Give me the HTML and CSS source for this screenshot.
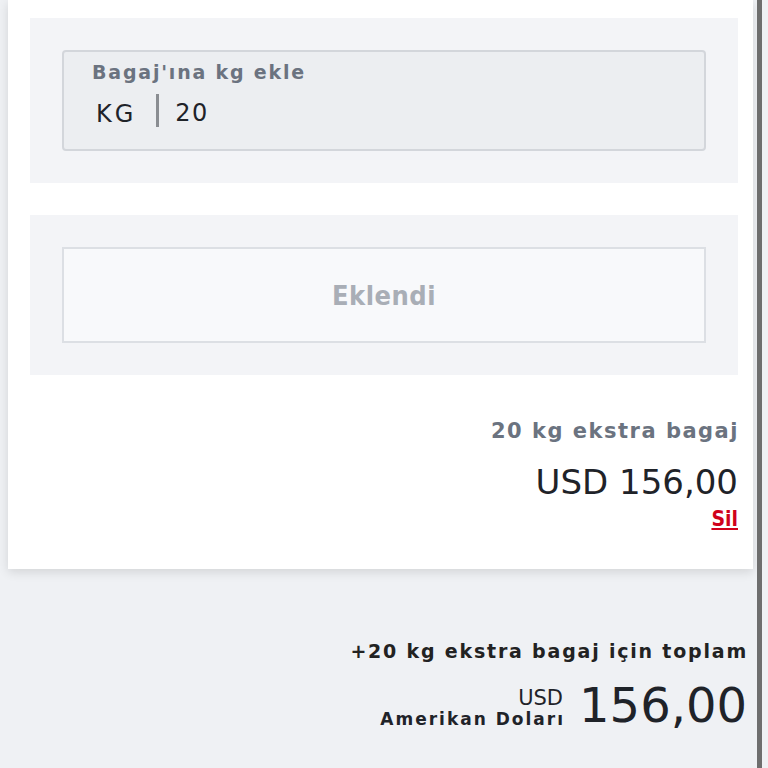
FILE: index.html
```html
<!DOCTYPE html>
<html lang="tr">
<head>
    <meta charset="UTF-8">
    <meta name="viewport" content="width=device-width, initial-scale=1.0">
    <title>Ekstra bagaj</title>
    <link rel="stylesheet" href="styles.css">
</head>
<body>
    <div class="page">
        <div class="main">
            <div class="card">
                <div class="section">
                    <div class="field">
                        <label class="field-label" for="kg">Bagaj'ına kg ekle</label>
                        <div class="field-row">
                            <span class="unit">KG</span>
                            <span class="divider"></span>
                            <input class="field-input" id="kg" type="text" value="20">
                        </div>
                    </div>
                </div>

                <div class="section">
                    <button class="added-btn" disabled>Eklendi</button>
                </div>

                <div class="summary">
                    <div class="summary-title">20 kg ekstra bagaj</div>
                    <div class="summary-price">USD 156,00</div>
                    <a class="remove-link" href="#">Sil</a>
                </div>
            </div>

            <div class="total">
                <div class="total-title">+20 kg ekstra bagaj için toplam</div>
                <div class="total-row">
                    <div class="currency">
                        <span class="currency-code">USD</span>
                        <span class="currency-name">Amerikan Doları</span>
                    </div>
                    <div class="total-amount">156,00</div>
                </div>
            </div>
        </div>
        <div class="scroll-edge"></div>
    </div>
</body>
</html>
```

FILE: styles.css
```css
html, body { margin: 0; padding: 0; height: 100%; }
body { font-family: "DejaVu Sans", Verdana, sans-serif; background: #eff1f4; color: #1f2329; overflow: hidden; }
.page { display: flex; height: 768px; }
.main { flex: 1; padding-left: 8px; padding-right: 4px; }
.scroll-edge { width: 5px; background: #6e6e6e; margin-right: 6px; }

.card { background: white; padding: 18px 15px 38px 22px; box-shadow: 0 3px 10px rgba(0, 0, 0, 0.12); }
.section { background: #f3f4f7; padding: 32px; }
.section + .section { margin-top: 32px; }

.field { background: #eceef1; border: 2px solid #d3d6db; border-radius: 4px; box-sizing: border-box; padding: 8px 28px 0 28px; height: 101px; }
.field-label { display: block; font-weight: bold; font-size: 19px; letter-spacing: 1.8px; color: #6b7380; line-height: 24px; }
.field-row { display: flex; align-items: center; margin-top: 10px; padding-left: 4px; }
.unit { font-size: 24px; letter-spacing: 3px; color: #1f2329; position: relative; top: 3px; }
.divider { width: 3px; height: 33px; background: #8a8d92; margin: 0 16px 0 20px; }
.field-input { font-family: "DejaVu Sans", sans-serif; font-size: 24px; letter-spacing: 1.5px; color: #1f2329; border: none; background: transparent; padding: 0; outline: none; width: 200px; margin-top: 4px; }

.added-btn { display: block; width: 100%; height: 96px; background: #f8f9fb; border: 2px solid #dcdfe4; font-family: "DejaVu Sans Condensed", "DejaVu Sans", sans-serif; font-weight: bold; font-size: 27px; letter-spacing: 0.5px; color: #a9aeb6; cursor: default; }

.summary { text-align: right; padding-top: 44px; }
.summary-title { font-weight: bold; font-size: 21px; color: #6b7380; letter-spacing: 1.5px; line-height: 24px; margin-right: -1px; }
.summary-price { font-size: 34px; line-height: 40px; margin-top: 19px; }
.remove-link { display: inline-block; margin-top: 5px; font-family: "DejaVu Sans Condensed", "DejaVu Sans", sans-serif; font-weight: bold; font-size: 21px; color: #d0021b; text-decoration: underline; line-height: 24px; }

.total { text-align: right; padding: 70px 6px 0 0; }
.total-title { font-weight: bold; font-size: 19px; letter-spacing: 1.8px; color: #222; line-height: 24px; margin-right: -1px; }
.total-row { display: flex; justify-content: flex-end; align-items: flex-end; gap: 16px; margin-top: 15px; }
.currency { display: flex; flex-direction: column; align-items: flex-end; font-weight: bold; padding-bottom: 3px; }
.currency-code { font-size: 21px; font-weight: normal; line-height: 23px; }
.currency-name { font-size: 17px; letter-spacing: 2px; line-height: 19px; margin-right: -2px; }
.total-amount { font-size: 48px; line-height: 54px; }
```
